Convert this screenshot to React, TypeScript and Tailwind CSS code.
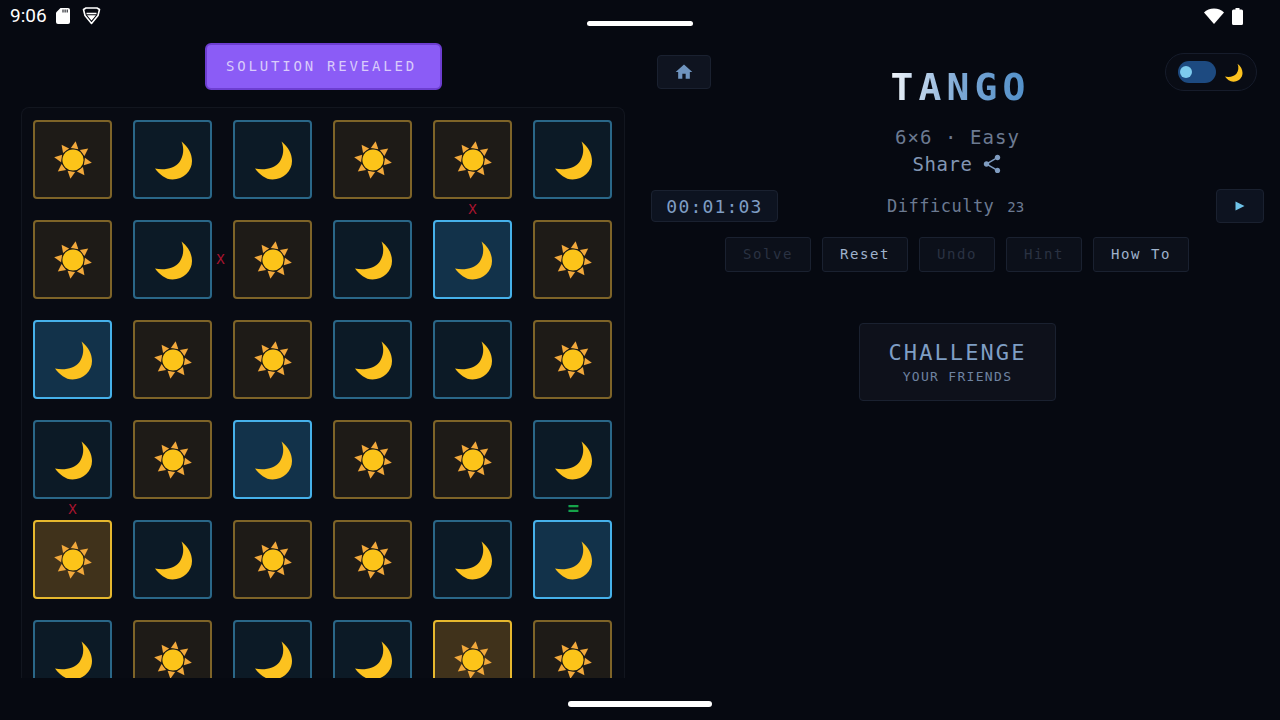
const rows = ["SMMSSM", "SMSMMS", "MSSMMS", "MSMSSM", "SMSSMM", "MSMMSS"];

// cells drawn brighter, as row-col
const lit = ["1-4", "2-0", "3-2", "4-0", "4-5", "5-4"];

function Sun() {
  const rays = [8, 53, 98, 143, 188, 233, 278, 323];
  return (
    <svg width="40" height="40" viewBox="-20 -20 40 40">
      {rays.map((a) => (
        <polygon key={a} points="-3.8,-11.5 3.8,-11.5 0,-19" fill="#f2a93b" transform={`rotate(${a})`} />
      ))}
      <circle r="11.2" fill="#1e1b17" />
      <circle r="10.6" fill="#fcc419" />
    </svg>
  );
}

function Moon({ size = 40 }: { size?: number }) {
  return (
    <svg width={size} height={size} viewBox="-19.5 -20 40 40">
      <path
        d="M9 -18.5C16 -13 19.5 -6 19.5 1C19.5 11 11 19.5 0 19.5C-7 19.5 -13 14.5 -17.5 8.5C-8 10.5 2 8.5 7 2C11 -4 12 -11 9 -18.5Z"
        fill="#fcc21f"
      />
    </svg>
  );
}

function Cell({ kind, row, col }: { kind: string; row: number; col: number }) {
  const on = lit.includes(`${row}-${col}`);
  let look = "bg-[#0c1a26] border-[#2a6788]";
  if (kind === "S") look = on ? "bg-[#40321b] border-[#e6b82e]" : "bg-[#1e1b17] border-[#7e6428]";
  else if (on) look = "bg-[#12324a] border-[#46b1ea]";

  return (
    <div className={`relative w-[79px] h-[79px] rounded-[4px] border-2 flex items-center justify-center ${look}`}>
      {kind === "S" ? <Sun /> : <Moon />}
      {row === 1 && col === 4 && <Mark className="left-[32px] top-[-21px] text-[14px] text-[#a8142f]">x</Mark>}
      {row === 1 && col === 2 && <Mark className="left-[-20px] top-[29px] text-[14px] text-[#a8142f]">x</Mark>}
      {row === 4 && col === 0 && <Mark className="left-[32px] top-[-21px] text-[14px] text-[#a8142f]">x</Mark>}
      {row === 4 && col === 5 && <Mark className="left-[33px] top-[-22px] text-[19px] font-bold text-[#16a34a]">=</Mark>}
    </div>
  );
}

function Mark({ className, children }: { className: string; children: string }) {
  return (
    <span className={`absolute w-[11px] flex justify-center leading-[16px] uppercase ${className}`}>{children}</span>
  );
}

function ActionButton({ label, off }: { label: string; off?: boolean }) {
  return (
    <button
      className={`h-[35px] px-[17px] rounded-[3px] border border-[#1a2130] bg-[#0c101a] text-[14px] tracking-[1.57px] ${
        off ? "text-[#2a3242]" : "text-[#9fb2cc]"
      }`}
    >
      {label}
    </button>
  );
}

export default function App() {
  return (
    <div
      className="relative w-[1280px] h-[720px] overflow-hidden bg-[#060911] flex flex-col"
      style={{ fontFamily: '"DejaVu Sans Mono", monospace' }}
    >
      {/* status bar */}
      <div className="h-[32px] shrink-0 flex items-center justify-between pl-[10px] pr-[37px] text-white">
        <div className="flex items-center">
          <span className="text-[19px] leading-[32px]" style={{ fontFamily: "Roboto, sans-serif" }}>
            9:06
          </span>
          <svg className="ml-[9px]" width="14" height="16" viewBox="0 0 14 16">
            <path d="M4.5 0H12a2 2 0 0 1 2 2v12a2 2 0 0 1-2 2H2a2 2 0 0 1-2-2V4.5Z" fill="#fff" />
            <path d="M6.5 1.5h1v3h-1zM8.6 1.5h1v3h-1zM10.7 1.5h1v3h-1z" fill="#060911" />
          </svg>
          <svg className="ml-[12px]" width="19" height="18" viewBox="0 0 19 18" fill="none">
            <path d="M1.5 2.5L4 1h11l2.5 1.5L16 8.5 9.5 16.5 3 8.5Z" stroke="#fff" strokeWidth="1.6" strokeLinejoin="round" />
            <path d="M4.5 6.5h10M6.5 9h6L9.5 12.5Z" stroke="#fff" strokeWidth="1.3" fill="#fff" />
          </svg>
        </div>
        <div className="flex items-center gap-[8px]">
          <svg width="20" height="16" viewBox="0 0 20 16">
            <path d="M10 16L0 4.5C2.5 1.8 6 0.5 10 0.5s7.5 1.3 10 4Z" fill="#fff" />
          </svg>
          <svg width="11" height="17" viewBox="0 0 11 17">
            <path d="M3.5 0h4v1.5H9.5A1.5 1.5 0 0 1 11 3v12.5a1.5 1.5 0 0 1-1.5 1.5h-8A1.5 1.5 0 0 1 0 15.5V3a1.5 1.5 0 0 1 1.5-1.5h2Z" fill="#fff" />
          </svg>
        </div>
      </div>
      <div className="absolute left-[587px] top-[21px] w-[106px] h-[5px] rounded-full bg-white" />

      {/* main */}
      <div className="h-[646px] shrink-0 flex overflow-hidden">
        <div className="w-[646px] shrink-0 pl-[21px] pr-[21px] pt-[11px] flex flex-col items-center">
          <div className="w-[237px] h-[47px] shrink-0 rounded-[6px] border-2 border-[#6d3ed1] bg-[#8b5cf6] flex items-center justify-center pr-[3px] text-[14px] tracking-[2.8px] text-[#d9cbfb]">
            SOLUTION REVEALED
          </div>
          <div className="mt-[17px] w-[604px] shrink-0 rounded-t-[8px] border border-b-0 border-[#12161f] bg-[#080b13] pl-[11px] pr-[12px] pt-[12px] pb-[21px]">
            <div className="grid grid-cols-6 gap-[21px]">
              {rows.map((r, row) =>
                r.split("").map((kind, col) => <Cell key={`${row}-${col}`} kind={kind} row={row} col={col} />),
              )}
            </div>
          </div>
        </div>

        <div className="ml-[5px] w-[613px] shrink-0 flex flex-col items-center">
          <div className="w-full h-[157px] shrink-0 grid grid-cols-[1fr_auto_1fr] items-start">
            <button className="ml-[6px] mt-[23px] w-[54px] h-[34px] rounded-[4px] border border-[#1a2130] bg-[#0f1420] flex items-center justify-center">
              <svg width="20" height="20" viewBox="0 0 24 24">
                <path d="M10 20v-6h4v6h5v-8h3L12 3 2 12h3v8z" fill="#6f94bf" />
              </svg>
            </button>
            <div className="pt-[33px] flex flex-col items-center">
              <h1 className="ml-[6px] text-[38px] leading-[44px] font-bold tracking-[5.1px] bg-gradient-to-r from-[#f0f5fa] via-[#7ba7d4] to-[#4f8fc9] bg-clip-text text-transparent">
                TANGO
              </h1>
              <div className="mt-[16px] text-[19px] leading-[24px] tracking-[1.06px] text-[#6c7a91]">6×6 · Easy</div>
              <div className="mt-[3px] flex items-center text-[19px] leading-[24px] tracking-[0.6px] text-[#8296b4]">
                Share
                <svg className="ml-[8px]" width="22" height="22" viewBox="0 0 24 24">
                  <path
                    d="M18 16.08c-.76 0-1.44.3-1.96.77L8.91 12.7c.05-.23.09-.46.09-.7s-.04-.47-.09-.7l7.05-4.11c.54.5 1.25.81 2.04.81 1.66 0 3-1.34 3-3s-1.34-3-3-3-3 1.34-3 3c0 .24.04.47.09.7L8.04 9.81C7.5 9.31 6.79 9 6 9c-1.66 0-3 1.34-3 3s1.34 3 3 3c.79 0 1.5-.31 2.04-.81l7.12 4.16c-.05.21-.08.43-.08.65 0 1.61 1.31 2.92 2.92 2.92s2.92-1.31 2.92-2.92-1.31-2.92-2.92-2.92z"
                    fill="#7f9cc0"
                  />
                </svg>
              </div>
            </div>
            <div className="flex justify-end pr-[7px] pt-[21px]">
              <div className="w-[92px] h-[38px] rounded-full border border-[#161c2b] bg-[#090c15] flex items-center pl-[12px]">
                <div className="w-[38px] h-[22px] rounded-full bg-[#1d4a80] flex items-center pl-[2px]">
                  <div className="w-[12px] h-[12px] rounded-full bg-[#7dcbee]" />
                </div>
                <div className="ml-[8px]">
                  <Moon size={19} />
                </div>
              </div>
            </div>
          </div>

          <div className="w-full h-[34px] shrink-0 flex items-start">
            <div className="mt-[1px] w-[127px] h-[32px] rounded-[4px] border border-[#1a2130] bg-[#0d1320] flex items-center justify-center text-[18px] tracking-[1.2px] text-[#7f9ec4]">
              00:01:03
            </div>
            <div className="ml-[109px] mr-auto h-[34px] pt-[2px] flex items-center text-[#6c7a91]">
              <span className="text-[17px] tracking-[0.5px]">Difficulty</span>
              <span className="ml-[13px] text-[14px]">23</span>
            </div>
            <button className="w-[48px] h-[34px] rounded-[4px] border border-[#1a2130] bg-[#0d1320] flex items-center justify-center">
              <svg width="10" height="10" viewBox="0 0 10 10">
                <path d="M0.5 0.5L9.5 5L0.5 9.5Z" fill="#6fc3e8" />
              </svg>
            </button>
          </div>

          <div className="mt-[14px] mr-[1px] flex gap-[11px]">
            <ActionButton label="Solve" off />
            <ActionButton label="Reset" />
            <ActionButton label="Undo" off />
            <ActionButton label="Hint" off />
            <ActionButton label="How To" />
          </div>

          <button className="mt-[51px] w-[197px] h-[78px] rounded-[4px] border border-[#1a2130] bg-[#0e111b] flex flex-col items-center justify-center">
            <span className="text-[22px] leading-[25px] tracking-[2.1px] text-[#7f9ec4]">CHALLENGE</span>
            <span className="mt-[4px] text-[13px] leading-[16px] tracking-[1.3px] text-[#6f83a1]">YOUR FRIENDS</span>
          </button>
        </div>
      </div>

      {/* gesture bar */}
      <div className="flex-1 flex justify-center pt-[23px]">
        <div className="w-[144px] h-[6px] rounded-full bg-white" />
      </div>
    </div>
  );
}
